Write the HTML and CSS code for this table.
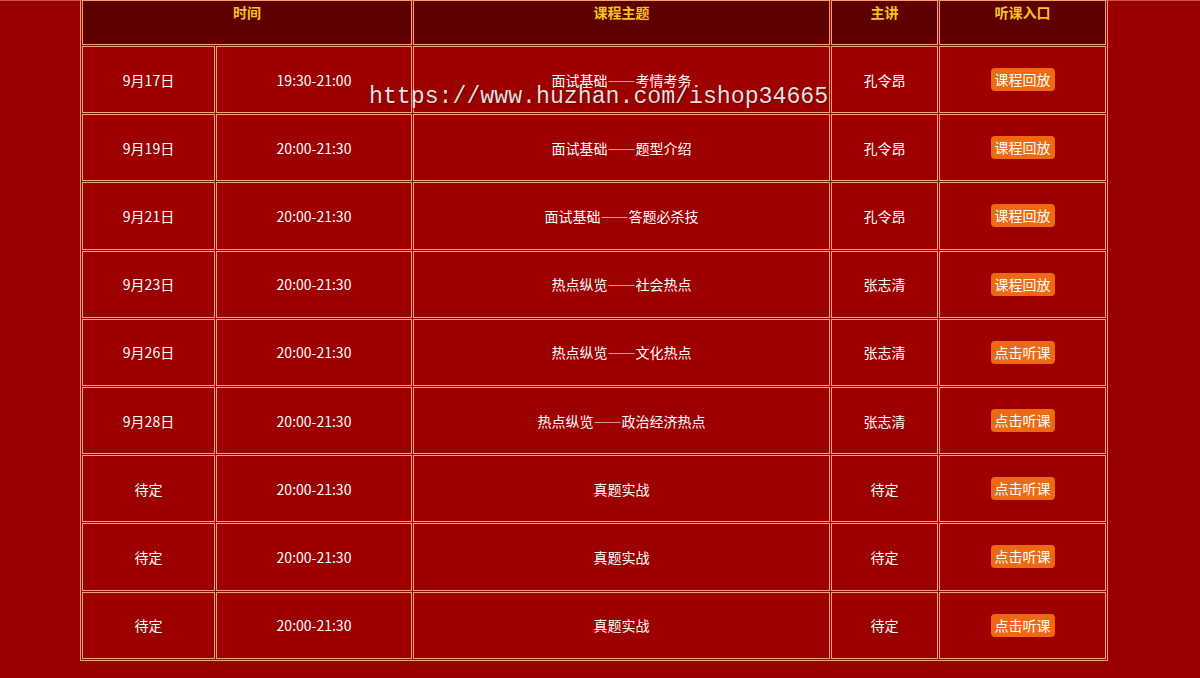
FILE: index.html
```html
<!DOCTYPE html>
<html lang="zh">
<head>
<meta charset="utf-8">
<title>课程表</title>
<link rel="stylesheet" href="styles.css">
</head>
<body>
<div class="page">
  <table class="schedule">
    <colgroup>
      <col class="c1"><col class="c2"><col class="c3"><col class="c4"><col class="c5">
    </colgroup>
    <thead>
      <tr>
        <th colspan="2">时间</th>
        <th>课程主题</th>
        <th>主讲</th>
        <th>听课入口</th>
      </tr>
    </thead>
    <tbody>
      <tr><td>9月17日</td><td>19:30-21:00</td><td>面试基础——考情考务</td><td>孔令昂</td><td><a class="btn">课程回放</a></td></tr>
      <tr><td>9月19日</td><td>20:00-21:30</td><td>面试基础——题型介绍</td><td>孔令昂</td><td><a class="btn">课程回放</a></td></tr>
      <tr><td>9月21日</td><td>20:00-21:30</td><td>面试基础——答题必杀技</td><td>孔令昂</td><td><a class="btn">课程回放</a></td></tr>
      <tr><td>9月23日</td><td>20:00-21:30</td><td>热点纵览——社会热点</td><td>张志清</td><td><a class="btn">课程回放</a></td></tr>
      <tr><td>9月26日</td><td>20:00-21:30</td><td>热点纵览——文化热点</td><td>张志清</td><td><a class="btn">点击听课</a></td></tr>
      <tr><td>9月28日</td><td>20:00-21:30</td><td>热点纵览——政治经济热点</td><td>张志清</td><td><a class="btn">点击听课</a></td></tr>
      <tr><td>待定</td><td>20:00-21:30</td><td>真题实战</td><td>待定</td><td><a class="btn">点击听课</a></td></tr>
      <tr><td>待定</td><td>20:00-21:30</td><td>真题实战</td><td>待定</td><td><a class="btn">点击听课</a></td></tr>
      <tr><td>待定</td><td>20:00-21:30</td><td>真题实战</td><td>待定</td><td><a class="btn">点击听课</a></td></tr>
    </tbody>
  </table>
  <div class="watermark">https://www.huzhan.com/ishop34665</div>
</div>
</body>
</html>
```

FILE: styles.css
```css
html, body {
  margin: 0;
  padding: 0;
  background: #9b0000;
  height: 100%;
  overflow: hidden;
}
body {
  font-family: "Noto Sans CJK SC", "Microsoft YaHei", sans-serif;
  font-size: 14px;
  color: #fff;
}
.page {
  position: relative;
  width: 1200px;
  height: 678px;
  border-top: 1px solid #c9584a;
  box-sizing: border-box;
}
.schedule {
  margin: -3px 0 0 80px;
  width: 1028px;
  border: 1px solid #f1a577;
  border-collapse: separate;
  border-spacing: 1px;
  table-layout: fixed;
}
.schedule th,
.schedule td {
  border: 1px solid #f1a577;
  text-align: center;
  padding: 0;
}
.schedule th {
  background: #5e0000;
  color: #f7c420;
  font-weight: bold;
  height: 42px;
  vertical-align: top;
  padding-top: 1px;
  line-height: 20px;
}
.schedule td {
  background: #9c0000;
  height: 65.2px;
  vertical-align: middle;
  line-height: 20px;
}
.c1 { width: 133px; }
.c2 { width: 196px; }
.c3 { width: 417px; }
.c4 { width: 107px; }
.c5 { width: 167px; }
.btn {
  display: inline-block;
  background: #ee6a12;
  color: #fff;
  border-radius: 4px;
  padding: 1px 4px;
  line-height: 21px;
  font-size: 14px;
  text-decoration: none;
}
.watermark {
  position: absolute;
  left: 369px;
  top: 82px;
  font-family: "Liberation Mono", monospace;
  font-size: 23.2px;
  line-height: 28px;
  color: #f3dede;
  text-shadow: 0 0 1px #4a0000, 1px 1px 0 #6a0000;
  white-space: nowrap;
}
```
